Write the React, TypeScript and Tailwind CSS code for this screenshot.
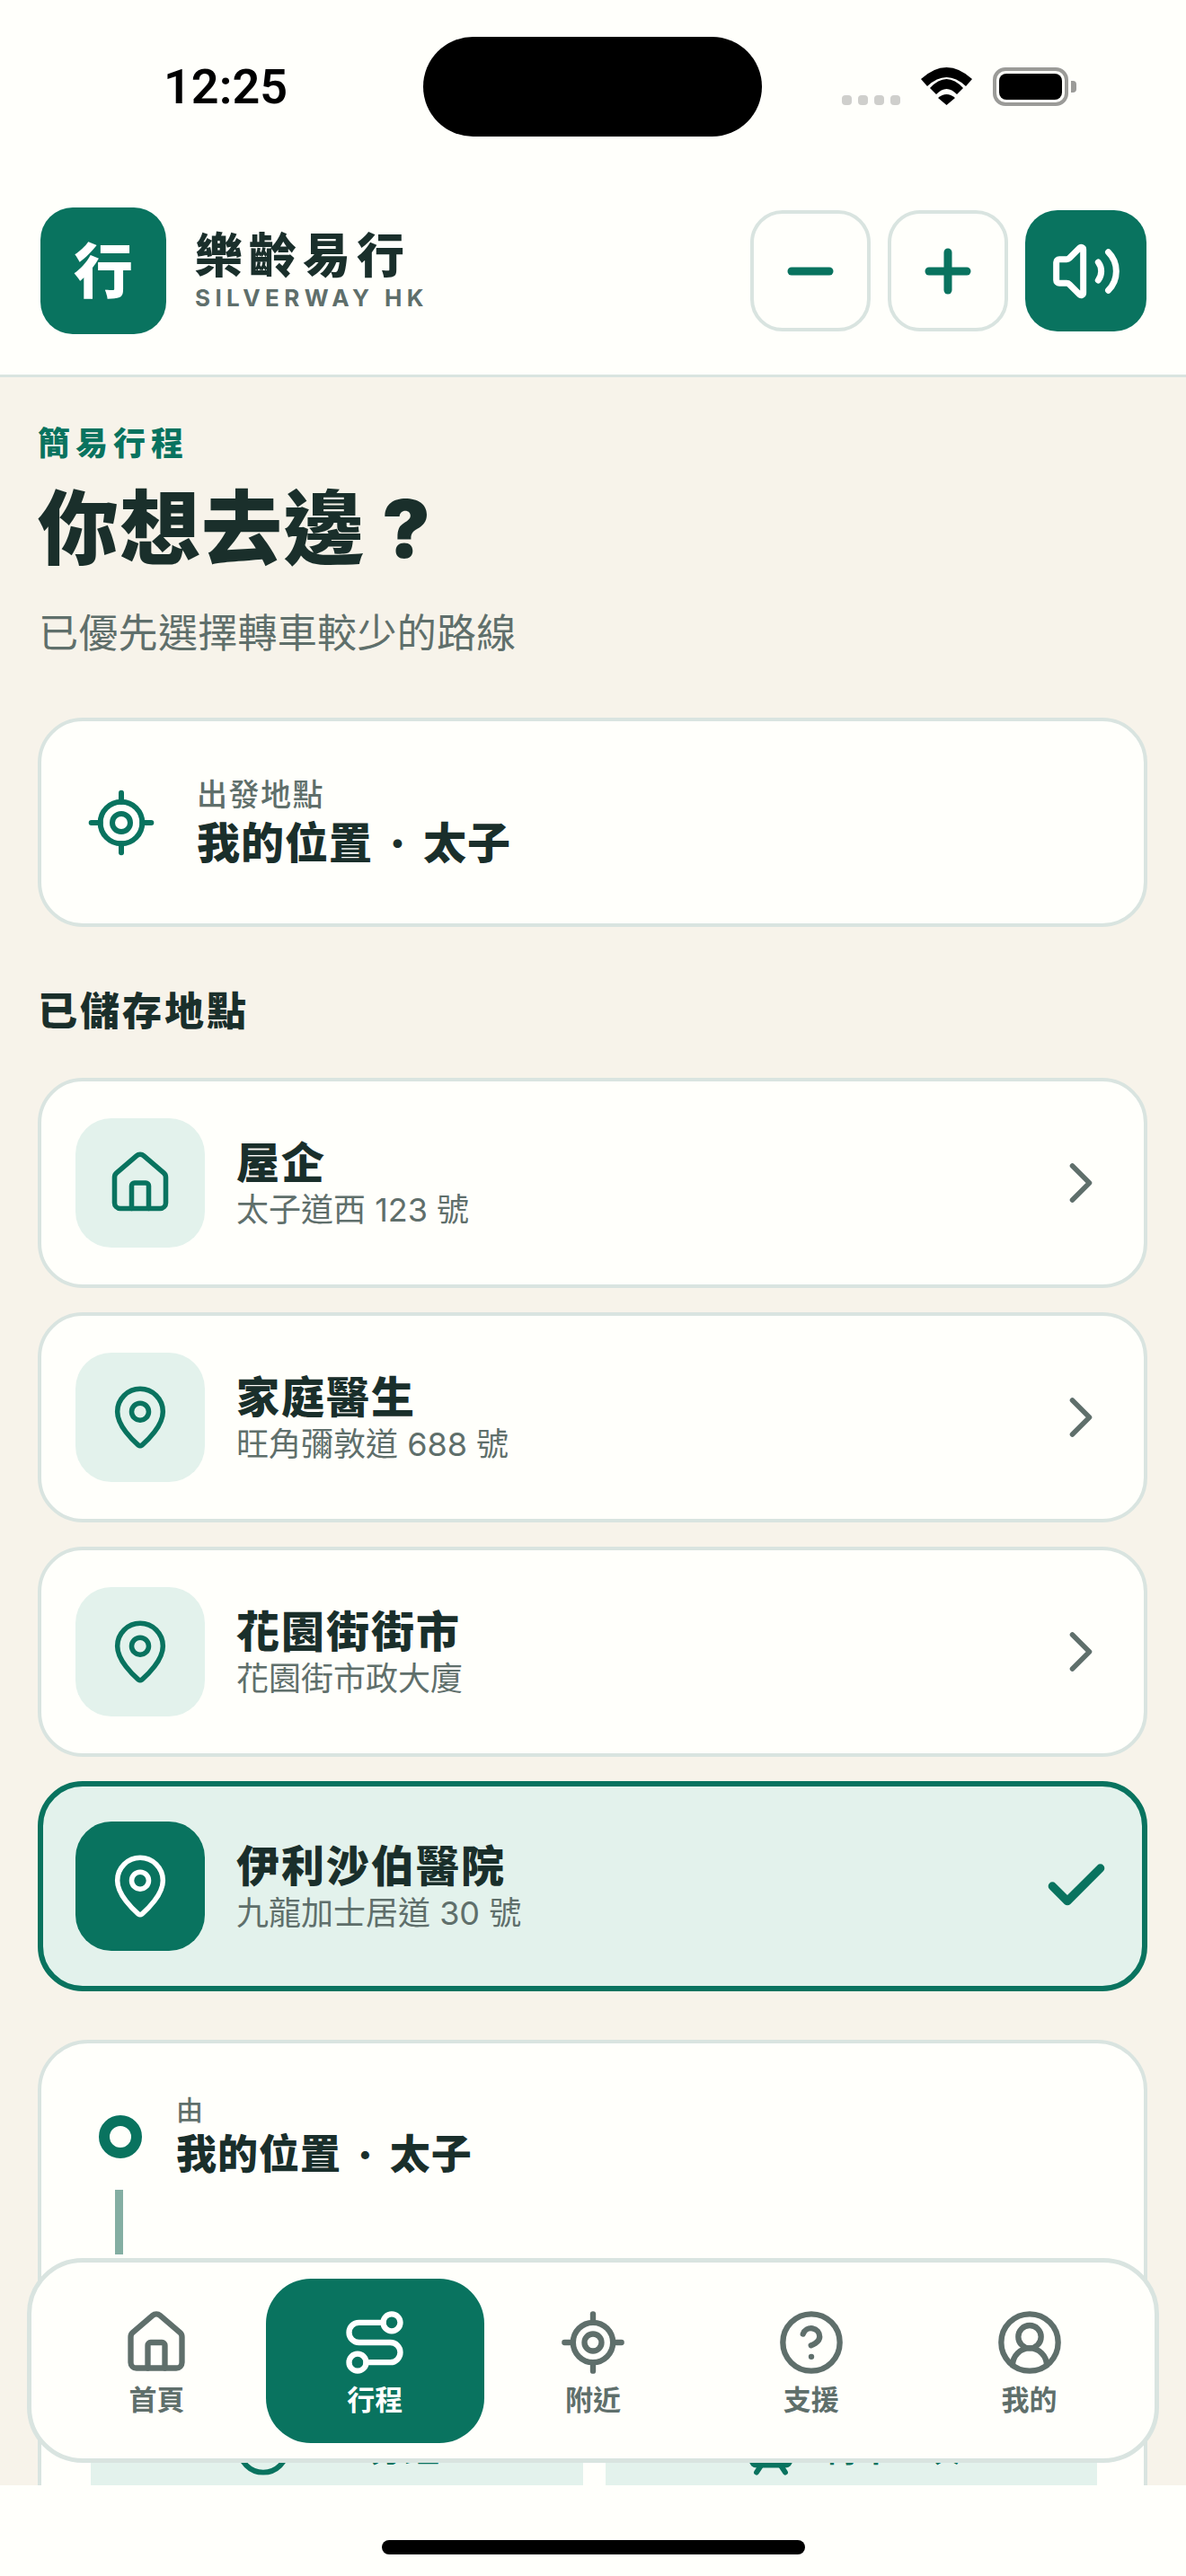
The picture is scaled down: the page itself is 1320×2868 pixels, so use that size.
import {
  Check,
  ChevronRight,
  CircleHelp,
  CircleUserRound,
  Clock,
  House,
  LocateFixed,
  MapPin,
  Minus,
  Plus,
  Route,
  TramFront,
  Volume2,
} from "lucide-react";

const places = [
  { name: "屋企", addr: "太子道西 123 號", home: true },
  { name: "家庭醫生", addr: "旺角彌敦道 688 號" },
  { name: "花園街街市", addr: "花園街市政大廈" },
];

const tabs = [
  { label: "首頁", Icon: House, size: 76 },
  { label: "行程", Icon: Route, size: 76, active: true },
  { label: "附近", Icon: LocateFixed, size: 76 },
  { label: "支援", Icon: CircleHelp, size: 76 },
  { label: "我的", Icon: CircleUserRound, size: 76 },
];

function StatusBar() {
  return (
    <div className="flex h-[231px] items-start pt-[41px]">
      <div className="ml-[182px] mt-[26px] w-[136px] font-['Roboto',sans-serif] text-[54px] font-semibold leading-[60px] text-black">
        12:25
      </div>
      <div className="ml-[153px] h-[111px] w-[377px] rounded-[56px] bg-black" />
      <div className="ml-[89px] mt-[65px] flex gap-[7px]">
        <div className="h-[11px] w-[11px] rounded-[4px] bg-[#cfcfcc]" />
        <div className="h-[11px] w-[11px] rounded-[4px] bg-[#cfcfcc]" />
        <div className="h-[11px] w-[11px] rounded-[4px] bg-[#cfcfcc]" />
        <div className="h-[11px] w-[11px] rounded-[4px] bg-[#cfcfcc]" />
      </div>
      <svg className="ml-[23px] mt-[34px]" width="57" height="42" viewBox="0 0 57 42">
        <path d="M0 13Q28.5-13 57 13L50 21Q28.5 1 7 21Z" fill="#000" />
        <path d="M10 23Q28.5 3 47 23L40 30Q28.5 18 17 30Z" fill="#000" />
        <path d="M19 34Q28.5 26 38 34L28.5 42Z" fill="#000" />
      </svg>
      <div className="ml-[23px] mt-[34px] flex items-center gap-[3px]">
        <div className="flex h-[43px] w-[84px] items-center justify-center rounded-[14px] border-[4px] border-[#9b9b98]">
          <div className="h-[29px] w-[70px] rounded-[8px] bg-black" />
        </div>
        <div className="h-[13px] w-[6px] rounded-r-[4px] bg-[#9b9b98]" />
      </div>
    </div>
  );
}

function Header() {
  return (
    <div className="border-b-[3px] border-[#d9e4e0] bg-[#fffffb]">
      <StatusBar />
      <div className="flex h-[186px] items-start pl-[45px] pr-[44px]">
        <div className="flex h-[141px] w-[140px] items-center justify-center rounded-[36px] bg-[#09735f] text-[66px] font-black leading-none text-white">
          行
        </div>
        <div className="ml-[32px] mt-[24px]">
          <div className="text-[53px] font-black leading-[60px] tracking-[7px] text-[#1a2f2b]">樂齡易行</div>
          <div className="mt-[2px] text-[26px] font-bold leading-[30px] tracking-[5.4px] text-[#5f6f6b]">SILVERWAY HK</div>
        </div>
        <div className="ml-auto mt-[3px] flex gap-[19px]">
          <button className="flex h-[135px] w-[134px] items-center justify-center rounded-[36px] border-[4px] border-[#d9e4e0] bg-[#fffffb] text-[#09735f]">
            <Minus size={72} strokeWidth={3} />
          </button>
          <button className="flex h-[135px] w-[134px] items-center justify-center rounded-[36px] border-[4px] border-[#d9e4e0] bg-[#fffffb] text-[#09735f]">
            <Plus size={72} strokeWidth={3} />
          </button>
          <button className="flex h-[135px] w-[135px] items-center justify-center rounded-[36px] bg-[#09735f] text-white">
            <Volume2 size={80} strokeWidth={2.1} />
          </button>
        </div>
      </div>
    </div>
  );
}

function PlaceCard({ name, addr, home }: { name: string; addr: string; home?: boolean }) {
  return (
    <div className="flex h-[234px] items-center rounded-[50px] border-[4px] border-[#d9e4e0] bg-[#fffffb] pl-[38px] pr-[32px]">
      <div className="flex h-[144px] w-[144px] items-center justify-center rounded-[40px] bg-[#e3f2ec] text-[#09735f]">
        {home ? <House size={76} strokeWidth={1.75} /> : <MapPin size={76} strokeWidth={1.75} />}
      </div>
      <div className="ml-[35px]">
        <div className="text-[48px] font-black leading-[58px] tracking-[2px] text-[#1a2f2b]">{name}</div>
        <div className="mt-[1px] text-[36px] leading-[44px] text-[#5f6f6b]">{addr}</div>
      </div>
      <ChevronRight className="ml-auto text-[#5f6f6b]" size={76} strokeWidth={1.75} />
    </div>
  );
}

function BottomNav() {
  return (
    <div className="absolute left-[30px] top-[2514px] flex h-[228px] w-[1260px] items-center rounded-[62px] border-[5px] border-[#d9e4e0] bg-[#fffffb] px-[18px]">
      {tabs.map(({ label, Icon, size, active }) => (
        <div
          key={label}
          className={
            active
              ? "flex h-[183px] w-[243px] flex-col items-center justify-start rounded-[50px] bg-[#09735f] pt-[33px] text-white"
              : "flex h-[183px] w-[243px] flex-col items-center justify-start pt-[33px] text-[#5f6f6b]"
          }
        >
          <Icon size={size} strokeWidth={2} />
          <span className="mt-[6px] text-[31px] font-bold leading-[40px]">{label}</span>
        </div>
      ))}
    </div>
  );
}

export default function App() {
  return (
    <div className="relative flex h-[2868px] w-[1320px] flex-col overflow-hidden bg-[#fffffb] font-['Inter','Noto_Sans_CJK_TC',sans-serif]">
      <Header />

      <main className="min-h-0 flex-1 overflow-hidden bg-[#f7f3ea] pl-[42px] pr-[43px] pt-[52px]">
        <div className="text-[36px] font-black leading-[44px] tracking-[6px] text-[#09735f]">簡易行程</div>
        <h1 className="mt-[21px] text-[90px] font-black leading-[104px] tracking-[1px] text-[#1a2f2b]">你想去邊 ?</h1>
        <p className="mt-[36px] pl-[1px] text-[44px] leading-[56px] tracking-[0.3px] text-[#5f6f6b]">已優先選擇轉車較少的路線</p>

        <div className="mt-[66px] flex h-[233px] items-center rounded-[50px] border-[4px] border-[#d9e4e0] bg-[#fffffb] pl-[49px]">
          <LocateFixed className="text-[#09735f]" size={80} strokeWidth={1.8} />
          <div className="ml-[44px]">
            <div className="text-[34px] font-medium leading-[42px] tracking-[1.5px] text-[#5f6f6b]">出發地點</div>
            <div className="mt-[4px] text-[48px] font-black leading-[58px] tracking-[1px] text-[#1a2f2b]">
              我的位置<span className="px-[8px]"> · </span>太子
            </div>
          </div>
        </div>

        <h2 className="mt-[66px] text-[44px] font-black leading-[56px] tracking-[3px] text-[#1a2f2b]">已儲存地點</h2>

        <div className="mt-[46px] flex flex-col gap-[27px]">
          {places.map((p) => (
            <PlaceCard key={p.name} {...p} />
          ))}
          <div className="flex h-[234px] items-center rounded-[50px] border-[6px] border-[#09735f] bg-[#e3f2ec] pl-[36px] pr-[33px]">
            <div className="flex h-[144px] w-[144px] items-center justify-center rounded-[40px] bg-[#09735f] text-white">
              <MapPin size={76} strokeWidth={1.75} />
            </div>
            <div className="ml-[35px]">
              <div className="text-[48px] font-black leading-[58px] tracking-[2px] text-[#1a2f2b]">伊利沙伯醫院</div>
              <div className="mt-[1px] text-[36px] leading-[44px] text-[#5f6f6b]">九龍加士居道 30 號</div>
            </div>
            <Check className="ml-auto text-[#09735f]" size={80} strokeWidth={2.8} />
          </div>
        </div>

        <div className="mt-[54px] rounded-[56px] border-[4px] border-[#d9e4e0] bg-[#fffffb] pb-[60px] pl-[55px] pr-[52px] pt-[54px]">
          <div className="ml-[9px] flex items-start">
            <div className="mt-[26px] h-[48px] w-[48px] rounded-full border-[12px] border-[#09735f] bg-[#fffffb]" />
            <div className="ml-[38px]">
              <div className="text-[30px] font-medium leading-[40px] text-[#5f6f6b]">由</div>
              <div className="mt-[3px] text-[45px] font-black leading-[54px] tracking-[1px] text-[#1a2f2b]">
                我的位置<span className="px-[8px]"> · </span>太子
              </div>
            </div>
          </div>
          <div className="ml-[27px] mt-[12px] h-[72px] w-[9px] bg-[#84aea2]" />
          <div className="ml-[9px] mt-[8px] flex items-start">
            <div className="mt-[26px] h-[48px] w-[48px] rounded-full bg-[#09735f]" />
            <div className="ml-[38px]">
              <div className="text-[30px] font-medium leading-[40px] text-[#5f6f6b]">到</div>
              <div className="text-[45px] font-black leading-[54px] tracking-[1px] text-[#1a2f2b]">伊利沙伯醫院</div>
            </div>
          </div>
          <div className="mt-[40px] flex gap-[25px]">
            <div className="flex h-[148px] flex-1 items-center justify-center gap-[27px] rounded-[36px] bg-[#e3f2ec] text-[#09735f]">
              <Clock size={64} strokeWidth={2.2} />
              <span className="text-[39px] font-bold">32 分鐘</span>
            </div>
            <div className="flex h-[148px] flex-1 items-center justify-center gap-[27px] rounded-[36px] bg-[#e3f2ec] text-[#09735f]">
              <TramFront size={64} strokeWidth={2.2} />
              <span className="text-[39px] font-bold">轉車 1 次</span>
            </div>
          </div>
        </div>
      </main>

      <div className="flex h-[101px] shrink-0 justify-center bg-[#fffffb] pt-[61px]">
        <div className="h-[16px] w-[471px] rounded-full bg-black" />
      </div>

      <BottomNav />
    </div>
  );
}
